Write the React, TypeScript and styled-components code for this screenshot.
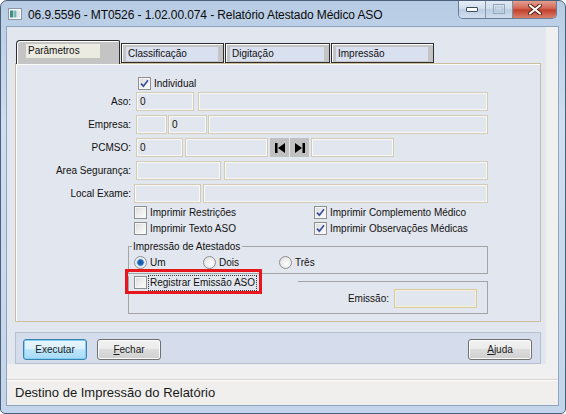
import React from 'react';
import styled, { createGlobalStyle } from 'styled-components';

const GlobalStyle = createGlobalStyle`
  html, body {
    margin: 0;
    padding: 0;
    background: #ffffff;
  }
  body {
    font-family: "Liberation Sans", Arial, sans-serif;
  }
`;

const Window = styled.div`
  width: 566px;
  height: 414px;
  box-sizing: border-box;
  display: flex;
  flex-direction: column;
  background: linear-gradient(180deg, #b7cce4 0%, #cfdef0 30%, #c3d5ea 100%);
  border: 1px solid #4d6079;
  border-radius: 7px 7px 5px 5px;
  overflow: hidden;
`;

const TitleBar = styled.div`
  height: 26px;
  flex: none;
  display: flex;
  align-items: center;
  padding-left: 7px;
  gap: 6px;
`;

const TitleText = styled.span`
  font-size: 12px;
  color: #0b0b0b;
  letter-spacing: -0.1px;
  margin-top: 1px;
`;

const Controls = styled.div`
  margin-left: auto;
  margin-right: 8px;
  align-self: flex-start;
  display: flex;
  height: 18px;
  margin-top: -1px;
  border: 1px solid #6b7d94;
  border-top: none;
  border-radius: 0 0 5px 5px;
  overflow: hidden;
`;

const CtrlButton = styled.div<{ $close?: boolean; $dim?: boolean }>`
  width: ${(p) => (p.$close ? 43 : 26)}px;
  display: flex;
  align-items: center;
  justify-content: center;
  background: ${(p) =>
    p.$close
      ? 'linear-gradient(180deg, #e6a597 0%, #d36b58 45%, #c2402c 55%, #d8806a 100%)'
      : 'linear-gradient(180deg, #e9f0f8 0%, #d4e0ee 45%, #bccde2 55%, #d2e0f0 100%)'};
  border-left: ${(p) => (p.$close || p.$dim ? '1px solid #7d8da3' : 'none')};
  opacity: ${(p) => (p.$dim ? 0.85 : 1)};
`;

const Middle = styled.div`
  flex: 1;
  display: flex;
  min-height: 0;
`;

const SideFrame = styled.div<{ $w: number }>`
  width: ${(p) => p.$w}px;
  flex: none;
`;

const Client = styled.div`
  flex: 1;
  display: flex;
  flex-direction: column;
  background: #f0f0f0;
  box-shadow: 0 0 0 1px #8fa4bd;
`;

const BottomFrame = styled.div`
  height: 8px;
  flex: none;
`;

const FormArea = styled.div`
  width: 539px;
  box-sizing: border-box;
  background: #e2e6ee;
  padding: 13px 5px 0 8px;
  display: flex;
  flex-direction: column;
`;

const TabRow = styled.div`
  height: 23px;
  display: flex;
  align-items: flex-end;
  gap: 1px;
  padding-left: 1px;
`;

const Tab = styled.div<{ $active?: boolean; $w: number }>`
  position: relative;
  z-index: ${(p) => (p.$active ? 2 : 0)};
  width: ${(p) => p.$w}px;
  height: ${(p) => (p.$active ? 24 : 20)}px;
  margin-bottom: ${(p) => (p.$active ? -1 : 0)}px;
  box-sizing: border-box;
  background: #c4c4c4;
  border: 1px solid #2e2e2e;
  border-bottom: ${(p) => (p.$active ? 'none' : '1px solid #2e2e2e')};
  border-radius: ${(p) => (p.$active ? '4px 2px 0 0' : '0')};
  box-shadow: inset 1px 1px 0 #ffffff;
  display: flex;
  align-items: flex-start;
  padding: ${(p) => (p.$active ? '3px 0 0 9px' : '3px 0 0 4px')};
`;

const TabLabel = styled.span<{ $active?: boolean; $w: number }>`
  width: ${(p) => p.$w}px;
  height: 14px;
  box-sizing: border-box;
  background: ${(p) => (p.$active ? '#ecebe2' : '#d9e0ef')};
  font-size: 10px;
  line-height: 14px;
  padding-left: 2px;
  color: #111;
`;

const Panel = styled.div`
  height: 259px;
  box-sizing: border-box;
  border: 1px solid #cbbd9c;
  box-shadow: inset 1px 1px 0 #fbfbf8;
  display: flex;
  flex-direction: column;
  padding-top: 13px;
`;

const Text = styled.span`
  font-size: 10px;
  color: #111;
  white-space: nowrap;
`;

const CheckLine = styled.label<{ $indent?: number }>`
  display: flex;
  align-items: center;
  gap: 3px;
  height: 13px;
  margin-left: ${(p) => p.$indent ?? 0}px;
`;

const CheckBox = styled.span`
  width: 13px;
  height: 13px;
  box-sizing: border-box;
  flex: none;
  border: 1px solid #8e8f8f;
  background: linear-gradient(135deg, #d8d8d8 0%, #f2f2f2 60%, #fcfcfc 100%);
  box-shadow: inset 0 0 0 1px #f6f6f6;
  display: inline-flex;
  align-items: center;
  justify-content: center;
`;

const Radio = styled.span<{ $on?: boolean }>`
  width: 13px;
  height: 13px;
  box-sizing: border-box;
  flex: none;
  border-radius: 50%;
  border: 1px solid #8e8f8f;
  background: ${(p) =>
    p.$on
      ? 'radial-gradient(circle at 50% 50%, #1d5aa8 0 2px, #3f8ad6 3px, #a9cbee 3.6px, #f4f4f4 4.4px, #e0e0e0 100%)'
      : 'radial-gradient(circle at 60% 60%, #fdfdfd 0%, #e9e9e9 60%, #d3d3d3 100%)'};
`;

const FieldGrid = styled.div`
  margin-top: 2px;
  display: grid;
  grid-template-columns: 115px 1fr;
  column-gap: 5px;
  row-gap: 4px;
`;

const FieldLabel = styled.span`
  font-size: 10px;
  color: #111;
  text-align: right;
  line-height: 19px;
  height: 19px;
  white-space: nowrap;
`;

const Inputs = styled.div<{ $shift?: number }>`
  display: flex;
  height: 19px;
  margin-left: ${(p) => p.$shift ?? 0}px;
`;

const Input = styled.div<{ $w: number; $gap?: number; $cream?: boolean }>`
  width: ${(p) => p.$w}px;
  height: 19px;
  margin-left: ${(p) => p.$gap ?? 0}px;
  box-sizing: border-box;
  flex: none;
  border: 1px solid ${(p) => (p.$cream ? '#d8cc9f' : '#d2cbb6')};
  box-shadow: inset 0 0 0 1px ${(p) => (p.$cream ? '#f6efd6' : '#f8f8f6')};
  background: #e2e6ee;
  font-size: 10px;
  line-height: 17px;
  padding-left: 3px;
  color: #111;
`;

const NavButton = styled.div<{ $gap?: number }>`
  width: 19px;
  height: 19px;
  margin-left: ${(p) => p.$gap ?? 0}px;
  flex: none;
  background: #c0c0c0;
  display: flex;
  align-items: center;
  justify-content: center;
`;

const ChecksGrid = styled.div`
  margin: 3px 0 0 118px;
  display: grid;
  grid-template-columns: 180px auto;
  row-gap: 3px;
`;

const Group = styled.div`
  margin-left: 112px;
  width: 360px;
  display: flex;
  flex-direction: column;
`;

const GroupHead = styled.div<{ $h: number; $line: number; $lead: number; $top: number }>`
  height: ${(p) => p.$h}px;
  margin-top: ${(p) => p.$top}px;
  display: flex;
  align-items: center;

  &::before,
  &::after {
    content: '';
    align-self: flex-end;
    height: ${(p) => p.$h - p.$line}px;
    box-sizing: border-box;
    border-top: 1px solid #a4a4a4;
  }
  &::before {
    width: ${(p) => p.$lead}px;
    border-left: 1px solid #a4a4a4;
    display: ${(p) => (p.$lead ? 'block' : 'none')};
  }
  &::after {
    flex: 1;
    border-right: 1px solid #a4a4a4;
  }
`;

const GroupTitle = styled.span`
  font-size: 10px;
  color: #111;
  padding: 0 2px 0 1px;
`;

const GroupBody = styled.div<{ $pad: string; $end?: boolean }>`
  border: 1px solid #a4a4a4;
  border-top: none;
  padding: ${(p) => p.$pad};
  display: flex;
  align-items: center;
  justify-content: ${(p) => (p.$end ? 'flex-end' : 'flex-start')};
`;

const RadioItem = styled.label<{ $w?: number }>`
  display: flex;
  align-items: center;
  gap: 3px;
  width: ${(p) => (p.$w ? `${p.$w}px` : 'auto')};
  height: 13px;
`;

const Legend = styled.div`
  position: relative;
  width: 170px;
  height: 13px;
  flex: none;
  display: flex;
  align-items: center;
  gap: 2px;
  padding-left: 5px;
  box-sizing: border-box;
  border-left: 1px solid #a4a4a4;
  align-self: flex-end;
  height: 13px;

  &::after {
    content: '';
    position: absolute;
    left: -4px;
    top: -7px;
    width: 137px;
    height: 25px;
    box-sizing: border-box;
    border: 3px solid #e8161d;
  }
`;

const FocusText = styled.span`
  font-size: 10px;
  color: #111;
  outline: 1px dotted #3a3a3a;
  outline-offset: 0;
  padding: 0 1px;
  line-height: 14px;
  height: 14px;
`;

const EmissaoLabel = styled.span`
  font-size: 10px;
  color: #111;
  margin-right: 5px;
`;

const ButtonBar = styled.div`
  margin-top: 10px;
  height: 32px;
  box-sizing: border-box;
  border: 1px solid #b6c0cf;
  background: #d5ddec;
  display: flex;
  align-items: flex-start;
  padding: 6px 8px 0 7px;
  gap: 10px;
`;

const Button = styled.div<{ $default?: boolean; $right?: boolean }>`
  width: 64px;
  height: 21px;
  box-sizing: border-box;
  margin-left: ${(p) => (p.$right ? 'auto' : '0')};
  border: 1px solid ${(p) => (p.$default ? '#3c7fb1' : '#707070')};
  border-radius: 3px;
  background: ${(p) =>
    p.$default
      ? 'linear-gradient(180deg, #eaf6fd 0%, #d9f0fc 49%, #bee6fd 50%, #a7d9f5 100%)'
      : 'linear-gradient(180deg, #f2f2f2 0%, #ebebeb 49%, #dddddd 50%, #cfcfcf 100%)'};
  box-shadow: inset 0 0 0 1px ${(p) => (p.$default ? '#7ed0f4' : '#fbfbfb')};
  font-size: 10px;
  color: #1b1b1b;
  display: flex;
  align-items: center;
  justify-content: center;

  u {
    text-decoration: underline;
    text-underline-offset: 1px;
  }
`;

const StatusBar = styled.div`
  margin-top: auto;
  height: 26px;
  box-sizing: border-box;
  border-top: 1px solid #d6d5d3;
  box-shadow: inset 0 1px 0 #ffffff;
  background: #f0efed;
  display: flex;
  align-items: center;
  padding-left: 8px;
  font-size: 13px;
  color: #1a1a1a;
`;

const Check = () => (
  <svg width="9" height="9" viewBox="0 0 9 9">
    <path d="M1 4.6 L3.4 7.2 L8 1.2" fill="none" stroke="#3b4f9a" strokeWidth="1.7" />
  </svg>
);

const AppIcon = () => (
  <svg width="14" height="12" viewBox="0 0 14 12">
    <rect x="0.5" y="0.5" width="13" height="11" fill="#f4f6f8" stroke="#8a96a3" />
    <rect x="2" y="2.5" width="3" height="7" fill="#3d8c86" />
    <rect x="5.5" y="2.5" width="3" height="7" fill="#7cb7b0" />
    <rect x="9" y="2.5" width="3" height="7" fill="#dfe6ec" />
  </svg>
);

const NavFirst = () => (
  <svg width="12" height="12" viewBox="0 0 12 12">
    <rect x="1" y="1" width="2.5" height="10" fill="#000" />
    <polygon points="11,1 4,6 11,11" fill="#000" />
  </svg>
);

const NavLast = () => (
  <svg width="12" height="12" viewBox="0 0 12 12">
    <polygon points="1,1 8,6 1,11" fill="#000" />
    <rect x="8.5" y="1" width="2.5" height="10" fill="#000" />
  </svg>
);

const Minimize = () => (
  <svg width="12" height="6" viewBox="0 0 12 6">
    <rect x="0.5" y="1.5" width="11" height="4" rx="0.5" fill="#ffffff" stroke="#3d4c5e" />
  </svg>
);

const Maximize = () => (
  <svg width="12" height="10" viewBox="0 0 12 10">
    <rect x="0.5" y="0.5" width="11" height="9" fill="none" stroke="#8e9fb3" />
    <rect x="2.5" y="3" width="7" height="4.5" fill="none" stroke="#b8c6d6" />
  </svg>
);

const CloseX = () => (
  <svg width="14" height="11" viewBox="0 0 14 11">
    <path d="M2 1.5 L12 9.5 M12 1.5 L2 9.5" stroke="#5a1d16" strokeWidth="4" strokeLinecap="round" />
    <path d="M2 1.5 L12 9.5 M12 1.5 L2 9.5" stroke="#ffffff" strokeWidth="2.2" strokeLinecap="round" />
  </svg>
);

const tabs = [
  { name: 'Parâmetros', w: 104, label: 74, active: true },
  { name: 'Classificação', w: 103, label: 92 },
  { name: 'Digitação', w: 105, label: 94 },
  { name: 'Impressão', w: 103, label: 92 },
];

const App = () => (
  <>
    <GlobalStyle />
    <Window>
      <TitleBar>
        <AppIcon />
        <TitleText>06.9.5596 - MT0526 - 1.02.00.074 - Relatório Atestado Médico ASO</TitleText>
        <Controls>
          <CtrlButton>
            <Minimize />
          </CtrlButton>
          <CtrlButton $dim>
            <Maximize />
          </CtrlButton>
          <CtrlButton $close>
            <CloseX />
          </CtrlButton>
        </Controls>
      </TitleBar>

      <Middle>
        <SideFrame $w={6} />
        <Client>
          <FormArea>
            <TabRow>
              {tabs.map((t) => (
                <Tab key={t.name} $active={t.active} $w={t.w}>
                  <TabLabel $active={t.active} $w={t.label}>
                    {t.name}
                  </TabLabel>
                </Tab>
              ))}
            </TabRow>

            <Panel>
              <CheckLine $indent={122}>
                <CheckBox>
                  <Check />
                </CheckBox>
                <Text>Individual</Text>
              </CheckLine>

              <FieldGrid>
                <FieldLabel>Aso:</FieldLabel>
                <Inputs>
                  <Input $w={58}>0</Input>
                  <Input $w={290} $gap={4} />
                </Inputs>

                <FieldLabel>Empresa:</FieldLabel>
                <Inputs>
                  <Input $w={31} />
                  <Input $w={39} $gap={1}>0</Input>
                  <Input $w={280} $gap={1} />
                </Inputs>

                <FieldLabel>PCMSO:</FieldLabel>
                <Inputs>
                  <Input $w={47}>0</Input>
                  <Input $w={83} $gap={2} />
                  <NavButton $gap={2}>
                    <NavFirst />
                  </NavButton>
                  <NavButton $gap={1}>
                    <NavLast />
                  </NavButton>
                  <Input $w={83} $gap={2} />
                </Inputs>

                <FieldLabel>Area Segurança:</FieldLabel>
                <Inputs>
                  <Input $w={85} />
                  <Input $w={264} $gap={3} />
                </Inputs>

                <FieldLabel>Local Exame:</FieldLabel>
                <Inputs $shift={-2}>
                  <Input $w={67} />
                  <Input $w={285} $gap={2} />
                </Inputs>
              </FieldGrid>

              <ChecksGrid>
                <CheckLine>
                  <CheckBox />
                  <Text>Imprimir Restrições</Text>
                </CheckLine>
                <CheckLine>
                  <CheckBox>
                    <Check />
                  </CheckBox>
                  <Text>Imprimir Complemento Médico</Text>
                </CheckLine>
                <CheckLine>
                  <CheckBox />
                  <Text>Imprimir Texto ASO</Text>
                </CheckLine>
                <CheckLine>
                  <CheckBox>
                    <Check />
                  </CheckBox>
                  <Text>Imprimir Observações Médicas</Text>
                </CheckLine>
              </ChecksGrid>

              <Group>
                <GroupHead $h={14} $line={7} $lead={4} $top={4}>
                  <GroupTitle>Impressão de Atestados</GroupTitle>
                </GroupHead>
                <GroupBody $pad="3px 0 4px 5px">
                  <RadioItem $w={69}>
                    <Radio $on />
                    <Text>Um</Text>
                  </RadioItem>
                  <RadioItem $w={76}>
                    <Radio />
                    <Text>Dois</Text>
                  </RadioItem>
                  <RadioItem>
                    <Radio />
                    <Text>Três</Text>
                  </RadioItem>
                </GroupBody>
              </Group>

              <Group>
                <GroupHead $h={13} $line={5} $lead={0} $top={2}>
                  <Legend>
                    <CheckBox />
                    <FocusText>Registrar Emissão ASO</FocusText>
                  </Legend>
                </GroupHead>
                <GroupBody $pad="0 10px 5px 0" $end>
                  <EmissaoLabel>Emissão:</EmissaoLabel>
                  <Input $w={83} $cream />
                </GroupBody>
              </Group>
            </Panel>

            <ButtonBar>
              <Button $default>Executar</Button>
              <Button>
                <span>
                  <u>F</u>echar
                </span>
              </Button>
              <Button $right>
                <span>
                  <u>A</u>juda
                </span>
              </Button>
            </ButtonBar>
          </FormArea>

          <StatusBar>Destino de Impressão do Relatório</StatusBar>
        </Client>
        <SideFrame $w={7} />
      </Middle>
      <BottomFrame />
    </Window>
  </>
);

export default App;
